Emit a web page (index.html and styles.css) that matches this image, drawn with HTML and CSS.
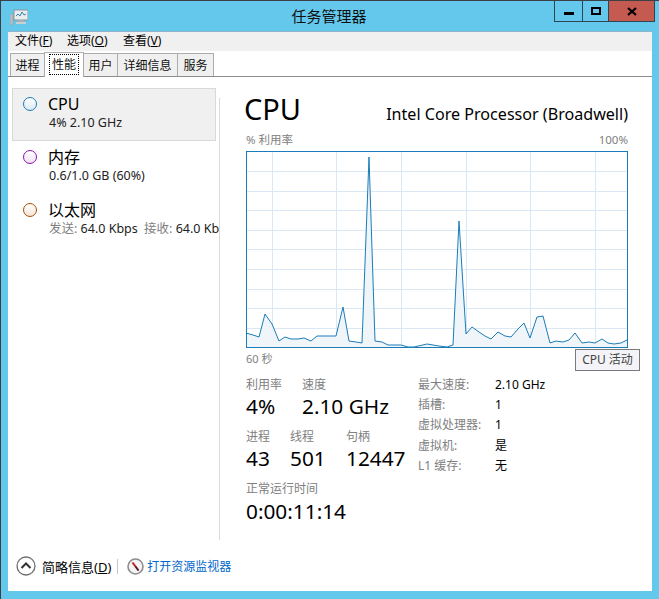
FILE: index.html
```html
<!DOCTYPE html>
<html lang="zh">
<head>
<meta charset="utf-8">
<title>任务管理器</title>
<link rel="stylesheet" href="styles.css">
</head>
<body>

<div class="window">
  <div class="titlebar">
    <svg class="app-icon" width="18" height="17" viewBox="0 0 18 17">
      <rect x="4" y="1" width="14" height="10" fill="#e8eef0" stroke="#8a9498"/>
      <path d="M6 7 L8 5 L10 7 L12 3 L14 6 L16 5" fill="none" stroke="#3d7fb0"/>
      <rect x="8" y="11" width="6" height="2" fill="#a8b0b4"/>
      <rect x="6" y="13" width="10" height="2" fill="#c8d0d4"/>
      <rect x="0" y="5" width="3" height="11" fill="#b8c0c4" stroke="#8a9498" stroke-width="0.5"/>
    </svg>
    <div class="title">任务管理器</div>
    <div class="controls">
      <div class="ctl ctl-min"><svg width="10" height="3"><rect width="10" height="3" fill="#000"/></svg></div>
      <div class="ctl ctl-max"><svg width="10" height="8"><rect x="1" y="1" width="8" height="6" fill="none" stroke="#000" stroke-width="2"/></svg></div>
      <div class="ctl ctl-close"><svg width="10" height="9"><path d="M1 1 L9 8 M9 1 L1 8" stroke="#000" stroke-width="2.2"/></svg></div>
    </div>
  </div>

  <div class="panel">
    <div class="menubar">
      <span class="menu-item">文件(<u>F</u>)</span>
      <span class="menu-item">选项(<u>O</u>)</span>
      <span class="menu-item">查看(<u>V</u>)</span>
    </div>

    <div class="tabs">
      <span class="tab tab-1">进程</span>
      <span class="tab tab-2 active"><span class="focus">性能</span></span>
      <span class="tab tab-3">用户</span>
      <span class="tab tab-4">详细信息</span>
      <span class="tab tab-5">服务</span>
    </div>

    <div class="main">
      <div class="sidebar">
        <div class="res selected">
          <span class="dot dot-cpu"></span>
          <div class="res-text">
            <div class="res-name">CPU</div>
            <div class="res-sub">4% 2.10 GHz</div>
          </div>
        </div>
        <div class="res">
          <span class="dot dot-mem"></span>
          <div class="res-text">
            <div class="res-name">内存</div>
            <div class="res-sub">0.6/1.0 GB (60%)</div>
          </div>
        </div>
        <div class="res">
          <span class="dot dot-net"></span>
          <div class="res-text">
            <div class="res-name">以太网</div>
            <div class="res-sub"><span class="gray">发送:</span> 64.0 Kbps <span class="gray gray-recv">接收:</span> 64.0 Kbps</div>
          </div>
        </div>
      </div>
      <div class="divider"></div>

      <div class="detail">
        <div class="head">
          <span class="head-title">CPU</span>
          <span class="head-model">Intel Core Processor (Broadwell)</span>
        </div>
        <div class="axis-top">
          <span>% 利用率</span>
          <span>100%</span>
        </div>

        <svg class="chart" width="382" height="197" viewBox="246 151 382 197">
          <path class="grid" d="M246 171.5H628 M246 191.5H628 M246 210.5H628 M246 230.5H628 M246 249.5H628 M246 269.5H628 M246 289.5H628 M246 308.5H628 M246 328.5H628 M272.5 151V348 M336.5 151V348 M401.5 151V348 M466.5 151V348 M530.5 151V348 M595.5 151V348"/>
          <path class="area" d="M246 347 L246 333 L253 335 L259 337 L265 314 L272 324 L279 341 L285 337 L291 339 L298 339 L304 338 L311 341 L317 336 L324 336 L336 336 L343 307 L349 341 L356 342 L362 343 L369 157 L375 341 L382 342 L388 345 L401 345 L408 347 L414 347 L427 344 L439 346 L447 347 L453 345 L459 221 L466 334 L472 327 L479 332 L485 336 L491 339 L498 332 L505 336 L511 337 L518 329 L524 323 L530 338 L537 317 L543 316 L550 343 L556 341 L563 342 L569 340 L575 333 L582 343 L589 342 L595 343 L602 339 L608 343 L614 344 L621 343 L627 340 L627 347 Z"/>
          <path class="line" d="M246 333 L253 335 L259 337 L265 314 L272 324 L279 341 L285 337 L291 339 L298 339 L304 338 L311 341 L317 336 L324 336 L336 336 L343 307 L349 341 L356 342 L362 343 L369 157 L375 341 L382 342 L388 345 L401 345 L408 347 L414 347 L427 344 L439 346 L447 347 L453 345 L459 221 L466 334 L472 327 L479 332 L485 336 L491 339 L498 332 L505 336 L511 337 L518 329 L524 323 L530 338 L537 317 L543 316 L550 343 L556 341 L563 342 L569 340 L575 333 L582 343 L589 342 L595 343 L602 339 L608 343 L614 344 L621 343 L627 340"/>
          <rect class="frame" x="246.5" y="151.5" width="381" height="196"/>
        </svg>

        <div class="axis-bottom">
          <span class="axis-left">60 秒</span>
          <span class="context-btn">CPU 活动</span>
        </div>

        <div class="stats">
          <div class="stats-left">
            <div class="stat-row">
              <div class="stat stat-usage"><div class="stat-label">利用率</div><div class="stat-value">4%</div></div>
              <div class="stat"><div class="stat-label">速度</div><div class="stat-value">2.10 GHz</div></div>
            </div>
            <div class="stat-row">
              <div class="stat stat-proc"><div class="stat-label">进程</div><div class="stat-value">43</div></div>
              <div class="stat stat-thread"><div class="stat-label">线程</div><div class="stat-value">501</div></div>
              <div class="stat"><div class="stat-label">句柄</div><div class="stat-value">12447</div></div>
            </div>
            <div class="stat-row">
              <div class="stat"><div class="stat-label">正常运行时间</div><div class="stat-value">0:00:11:14</div></div>
            </div>
          </div>
          <div class="specs">
            <span class="spec-key">最大速度:</span><span>2.10 GHz</span>
            <span class="spec-key">插槽:</span><span>1</span>
            <span class="spec-key">虚拟处理器:</span><span>1</span>
            <span class="spec-key">虚拟机:</span><span>是</span>
            <span class="spec-key">L1 缓存:</span><span>无</span>
          </div>
        </div>
      </div>
    </div>

    <div class="footer">
      <svg class="fewer" width="20" height="20" viewBox="0 0 20 20">
        <circle cx="10" cy="10" r="9" fill="#fff" stroke="#6e6e6e" stroke-width="1.3"/>
        <path d="M5.5 12 L10 7.5 L14.5 12" fill="none" stroke="#333" stroke-width="2"/>
      </svg>
      <span class="fewer-text">简略信息(<u>D</u>)</span>
      <span class="footer-sep"></span>
      <svg class="monitor" width="17" height="17" viewBox="0 0 17 17">
        <circle cx="8.5" cy="8.5" r="7.5" fill="#f4f4f4" stroke="#8c8c8c" stroke-width="1.6"/>
        <path d="M5.5 4.5 L11.5 12.5" stroke="#c0202c" stroke-width="2"/>
        <path d="M8.5 8.5 L11.5 12.5" stroke="#40282c" stroke-width="1.4"/>
      </svg>
      <span class="link">打开资源监视器</span>
    </div>
  </div>
</div>

</body>
</html>
```

FILE: styles.css
```css
html, body {
  margin: 0;
  padding: 0;
}

body {
  font-family: "Noto Sans", "Noto Sans CJK SC", sans-serif;
  font-size: 12px;
  color: #000;
  background-color: #63c8ec;
}

.window {
  width: 659px;
  height: 599px;
  box-sizing: border-box;
  border-top: 1px solid #3a4046;
  border-left: 1px solid #3a4046;
  background-color: #63c8ec;
  display: flex;
  flex-direction: column;
  overflow: hidden;
}

/* title bar */
.titlebar {
  height: 30px;
  flex: none;
  display: grid;
  grid-template-columns: 1fr auto 1fr;
  align-items: start;
}

.app-icon {
  margin: 8px 0 0 9px;
}

.title {
  font-size: 15px;
  line-height: 20px;
  margin: 5px 2px 0 0;
  color: #111;
}

.controls {
  display: flex;
  justify-self: end;
  margin-right: 4px;
  height: 21px;
  box-sizing: border-box;
  border: 1px solid #2c4653;
  border-top: none;
}

.ctl {
  display: flex;
  align-items: center;
  justify-content: center;
  height: 20px;
  border-right: 1px solid #2c4653;
}

.ctl-min {
  width: 27px;
}

.ctl-min svg {
  margin-top: 5px;
}

.ctl-max {
  width: 25px;
}

.ctl-close {
  width: 45px;
  border-right: none;
  background-color: #c45a50;
}

/* white panel */
.panel {
  flex: 1;
  margin: 0 7px 8px 7px;
  background-color: #fff;
  display: flex;
  flex-direction: column;
  min-height: 0;
}

.menubar {
  height: 20px;
  flex: none;
  background-color: #f0f0f0;
  border-top: 1px solid #8db4c8;
  box-sizing: border-box;
  display: flex;
  align-items: center;
  padding: 0 0 2px 7px;
  gap: 14px;
  line-height: 18px;
}

.menu-item {
  width: 42px;
}

.menu-item:first-child {
  width: 38px;
}

/* tabs */
.tabs {
  height: 26px;
  flex: none;
  box-sizing: border-box;
  border-bottom: 1px solid #8c8c8c;
  display: flex;
  align-items: flex-end;
  padding-left: 2px;
}

.tab {
  height: 23px;
  box-sizing: border-box;
  background-color: #f0f0f0;
  border: 1px solid #acacac;
  border-bottom: none;
  margin-left: -1px;
  padding-top: 2px;
  display: flex;
  align-items: center;
  justify-content: center;
  line-height: 18px;
  color: #111;
}

.tab-1 { width: 35px; margin-left: 0; }
.tab-3 { width: 35px; }
.tab-4 { width: 61px; }
.tab-5 { width: 37px; }

.tab.active {
  width: 40px;
  height: 25px;
  margin-bottom: -1px;
  padding-top: 0;
  background-color: #fff;
  position: relative;
}

.focus {
  border: 1px dotted #000;
  padding: 1px 2px;
  line-height: 17px;
  margin-bottom: 1px;
}

/* main area */
.main {
  flex: 1;
  display: flex;
  min-height: 0;
}

.sidebar {
  width: 211px;
  flex: none;
  box-sizing: border-box;
  padding: 11px 0 0 4px;
  overflow: hidden;
}

.divider {
  width: 1px;
  flex: none;
  height: 442px;
  margin-top: 21px;
  background-color: #d9d9d9;
}

.res {
  width: 204px;
  height: 53px;
  box-sizing: border-box;
  padding: 6px 0 0 10px;
  display: flex;
  border: 1px solid transparent;
}

.res.selected {
  background-color: #f0f0f0;
  border-color: #d9d9d9;
}

.dot {
  width: 14px;
  height: 14px;
  box-sizing: border-box;
  border-radius: 50%;
  flex: none;
  margin: 2px 11px 0 0;
  border: 1.5px solid;
}

.dot-cpu { border-color: #1a7cb8; background: linear-gradient(#fff, #dce9f4); }
.dot-mem { border-color: #8b12ae; background: linear-gradient(#fff, #f0e0f6); }
.dot-net { border-color: #a74f01; background: linear-gradient(#fff, #f6e6da); }

.res-text {
  white-space: nowrap;
}

.res-name {
  font-size: 16px;
  line-height: 19px;
}

.res-sub {
  font-size: 12.5px;
  line-height: 17px;
  margin-left: 1px;
  color: #222;
}

.gray {
  color: #808080;
}

.gray-recv {
  margin-left: 3px;
}

.detail {
  padding: 11px 0 0 26px;
  width: 394px;
}

.head {
  width: 382px;
  height: 42px;
  display: flex;
  justify-content: space-between;
  align-items: center;
}

.head-title {
  font-size: 29px;
  line-height: 42px;
  margin-left: -2px;
}

.head-model {
  font-size: 16.1px;
  line-height: 22px;
  margin-top: 10px;
}

.axis-top {
  width: 382px;
  display: flex;
  justify-content: space-between;
  color: #808080;
  font-size: 11.5px;
  line-height: 16px;
  margin-top: 2px;
  margin-bottom: 3px;
}

.chart {
  display: block;
}

.grid {
  fill: none;
  stroke: #d9e8f4;
  stroke-width: 1;
}

.area {
  fill: #f0f5fa;
}

.line {
  fill: none;
  stroke: #1a7cb8;
  stroke-width: 1;
}

.frame {
  fill: none;
  stroke: #1a7cb8;
  stroke-width: 1;
}

.axis-bottom {
  width: 394px;
  height: 22px;
  margin-top: 1px;
  display: flex;
  justify-content: space-between;
}

.axis-left {
  color: #808080;
  font-size: 11px;
  line-height: 20px;
}

.context-btn {
  width: 65px;
  height: 22px;
  box-sizing: border-box;
  border: 1px solid #7a7a7a;
  background-color: #f4f4f8;
  color: #444;
  text-align: center;
  line-height: 20px;
}

/* counters */
.stats {
  display: flex;
  margin-top: 6px;
}

.stats-left {
  width: 172px;
  flex: none;
}

.stat-row {
  display: flex;
  height: 52px;
}

.stat-usage { width: 56px; }
.stat-proc { width: 44px; }
.stat-thread { width: 56px; }

.stat {
  white-space: nowrap;
}

.stat-label {
  color: #808080;
  line-height: 16px;
}

.stat-value {
  font-size: 20.8px;
  line-height: 28px;
  margin-top: -1px;
}

.stat-row:last-child .stat-value {
  margin-top: 0;
}

.specs {
  display: grid;
  grid-template-columns: 77px auto;
  grid-auto-rows: 20.2px;
  line-height: 16px;
  align-content: start;
}

.spec-key {
  color: #808080;
}

/* footer */
.footer {
  height: 50px;
  flex: none;
  display: flex;
  align-items: center;
  padding: 0 0 0 8px;
}

.fewer {
  flex: none;
}

.fewer-text {
  font-size: 13px;
  margin-left: 6px;
}

.footer-sep {
  width: 1px;
  height: 15px;
  background-color: #c8c8c8;
  margin: 0 9px 0 6px;
}

.link {
  color: #0066cc;
  margin-left: 3px;
}
```
